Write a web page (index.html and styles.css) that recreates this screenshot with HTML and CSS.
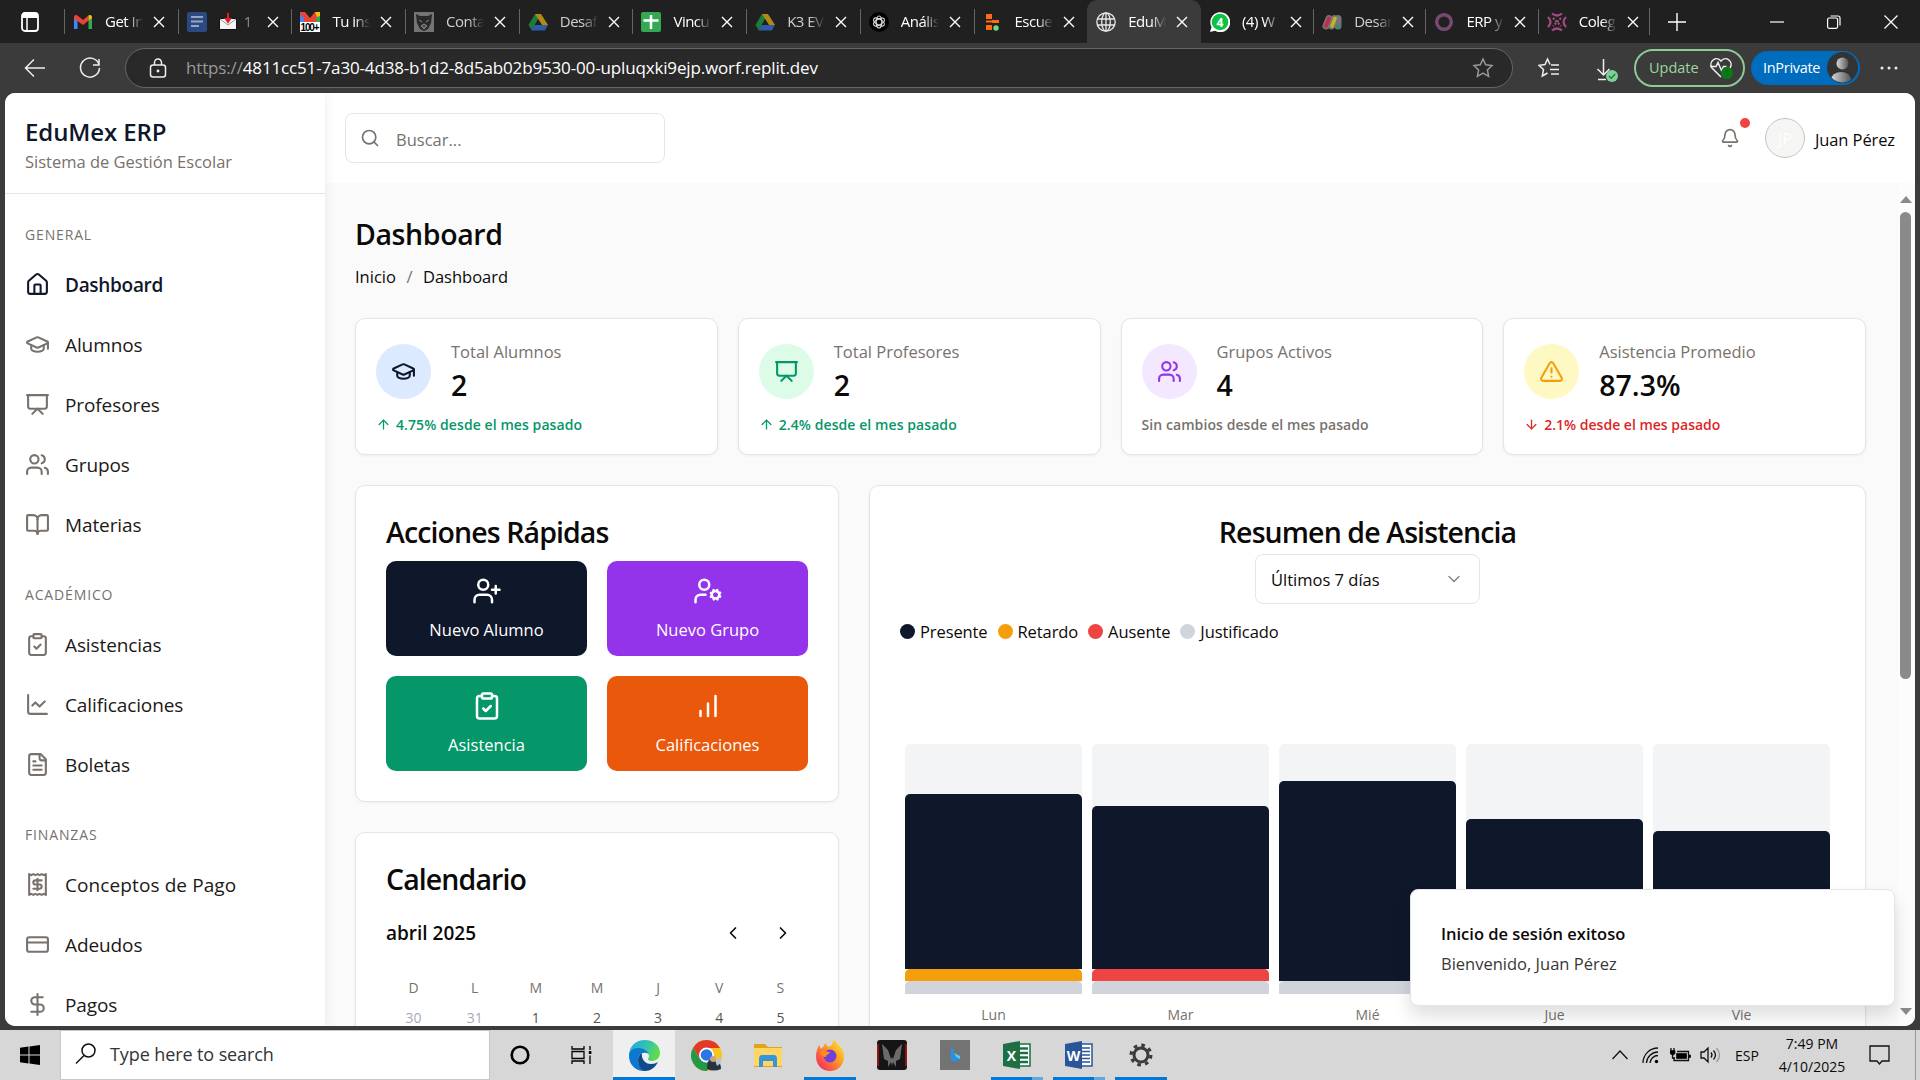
FILE: index.html
```html
<!DOCTYPE html>
<html lang="es">
<head>
<meta charset="utf-8">
<title>EduMex ERP</title>
<link rel="stylesheet" href="styles.css">
</head>
<body>
<svg class="defs" width="0" height="0">
  <symbol id="house" viewBox="0 0 24 24"><path d="M15 21v-8a1 1 0 0 0-1-1h-4a1 1 0 0 0-1 1v8"/><path d="M3 10a2 2 0 0 1 .709-1.528l7-5.999a2 2 0 0 1 2.582 0l7 5.999A2 2 0 0 1 21 10v9a2 2 0 0 1-2 2H5a2 2 0 0 1-2-2z"/></symbol>
  <symbol id="cap" viewBox="0 0 24 24"><path d="M21.42 10.922a1 1 0 0 0-.019-1.838L12.83 5.18a2 2 0 0 0-1.66 0L2.6 9.08a1 1 0 0 0 0 1.832l8.57 3.908a2 2 0 0 0 1.66 0z"/><path d="M22 10v6"/><path d="M6 12.5V16a6 3 0 0 0 12 0v-3.5"/></symbol>
  <symbol id="board" viewBox="0 0 24 24"><path d="M2 3h20"/><path d="M21 3v11a2 2 0 0 1-2 2H5a2 2 0 0 1-2-2V3"/><path d="m7 21 5-5 5 5"/></symbol>
  <symbol id="users" viewBox="0 0 24 24"><path d="M16 21v-2a4 4 0 0 0-4-4H6a4 4 0 0 0-4 4v2"/><circle cx="9" cy="7" r="4"/><path d="M22 21v-2a4 4 0 0 0-3-3.87"/><path d="M16 3.13a4 4 0 0 1 0 7.75"/></symbol>
  <symbol id="book" viewBox="0 0 24 24"><path d="M12 7v14"/><path d="M3 18a1 1 0 0 1-1-1V4a1 1 0 0 1 1-1h5a4 4 0 0 1 4 4 4 4 0 0 1 4-4h5a1 1 0 0 1 1 1v13a1 1 0 0 1-1 1h-6a3 3 0 0 0-3 3 3 3 0 0 0-3-3z"/></symbol>
  <symbol id="clip" viewBox="0 0 24 24"><rect x="8" y="2" width="8" height="4" rx="1"/><path d="M16 4h2a2 2 0 0 1 2 2v14a2 2 0 0 1-2 2H6a2 2 0 0 1-2-2V6a2 2 0 0 1 2-2h2"/><path d="m9 14 2 2 4-4"/></symbol>
  <symbol id="line" viewBox="0 0 24 24"><path d="M3 3v16a2 2 0 0 0 2 2h16"/><path d="m19 9-5 5-4-4-3 3"/></symbol>
  <symbol id="file" viewBox="0 0 24 24"><path d="M15 2H6a2 2 0 0 0-2 2v16a2 2 0 0 0 2 2h12a2 2 0 0 0 2-2V7Z"/><path d="M14 2v4a2 2 0 0 0 2 2h4"/><path d="M10 9H8M16 13H8M16 17H8"/></symbol>
  <symbol id="receipt" viewBox="0 0 24 24"><path d="M4 2v20l2-1 2 1 2-1 2 1 2-1 2 1 2-1 2 1V2l-2 1-2-1-2 1-2-1-2 1-2-1-2 1Z"/><path d="M16 8h-6a2 2 0 1 0 0 4h4a2 2 0 1 1 0 4H8"/><path d="M12 17.5v-11"/></symbol>
  <symbol id="card" viewBox="0 0 24 24"><rect x="2" y="5" width="20" height="14" rx="2"/><path d="M2 10h20"/></symbol>
  <symbol id="dollar" viewBox="0 0 24 24"><path d="M12 2v20"/><path d="M17 5H9.5a3.5 3.5 0 0 0 0 7h5a3.5 3.5 0 0 1 0 7H6"/></symbol>
  <symbol id="search" viewBox="0 0 24 24"><circle cx="11" cy="11" r="8"/><path d="m21 21-4.3-4.3"/></symbol>
  <symbol id="bell" viewBox="0 0 24 24"><path d="M10.268 21a2 2 0 0 0 3.464 0"/><path d="M3.262 15.326A1 1 0 0 0 4 17h16a1 1 0 0 0 .74-1.673C19.41 13.956 18 12.499 18 8A6 6 0 0 0 6 8c0 4.499-1.411 5.956-2.738 7.326"/></symbol>
  <symbol id="up" viewBox="0 0 24 24"><path d="m5 12 7-7 7 7"/><path d="M12 19V5"/></symbol>
  <symbol id="down" viewBox="0 0 24 24"><path d="M12 5v14"/><path d="m19 12-7 7-7-7"/></symbol>
  <symbol id="warn" viewBox="0 0 24 24"><path d="m21.73 18-8-14a2 2 0 0 0-3.48 0l-8 14A2 2 0 0 0 4 21h16a2 2 0 0 0 1.73-3"/><path d="M12 9v4M12 17h.01"/></symbol>
  <symbol id="uplus" viewBox="0 0 24 24"><path d="M16 21v-2a4 4 0 0 0-4-4H6a4 4 0 0 0-4 4v2"/><circle cx="9" cy="7" r="4"/><path d="M19 8v6M22 11h-6"/></symbol>
  <symbol id="ucog" viewBox="0 0 24 24"><circle cx="9" cy="7" r="4"/><path d="M10 15H6a4 4 0 0 0-4 4v2"/><circle cx="18" cy="15" r="3"/><path d="m21.7 16.4-.9-.3M15.2 13.9l-.9-.3M16.6 18.7l.3-.9M19.1 12.2l.3-.9M19.6 18.7l-.4-1M16.8 12.3l-.4-1M14.3 16.6l1-.4M20.7 13.8l1-.4"/></symbol>
  <symbol id="bars" viewBox="0 0 24 24"><path d="M12 20V10M18 20V4M6 20v-4"/></symbol>
  <symbol id="cdown" viewBox="0 0 24 24"><path d="m6 9 6 6 6-6"/></symbol>
  <symbol id="cleft" viewBox="0 0 24 24"><path d="m15 18-6-6 6-6"/></symbol>
  <symbol id="cright" viewBox="0 0 24 24"><path d="m9 18 6-6-6-6"/></symbol>
  <symbol id="x" viewBox="0 0 12 12"><path d="M1 1l10 10M11 1L1 11"/></symbol>
  <symbol id="drive" viewBox="0 0 20 20"><path d="M7 2h6l-6.500 11.500L3.500 18 0.500 13z" fill="#1c7c3a"/><path d="M7 2h6l7 11h-6z" fill="#b08a13"/><path d="M6.500 13H20l-3.200 5.500H3.300z" fill="#2f5ca8"/><path d="M10 7.500 13.300 13H6.700z" fill="#202020"/></symbol>
</svg>

<header class="tabs">
  <div class="tabs-menu"><svg width="20" height="22" viewBox="0 0 20 22"><rect x="2" y="2" width="16" height="18" rx="3" fill="none" stroke="#fff" stroke-width="1.800"/><path d="M2 4.500a3 3 0 0 1 3-3h10a3 3 0 0 1 3 3V7H2z" fill="#fff"/><path d="M7 7v13" stroke="#fff" stroke-width="1.500"/></svg></div>
  <div class="tab-row">
    <div class="tab"><svg class="fav" viewBox="0 0 20 20"><path d="M1 17V5l3.500 2.500V17z" fill="#4285f4"/><path d="M15.500 17V7.500L19 5v12z" fill="#34a853"/><path d="M1 5.500C1 3 3 2.500 4.500 3.500L10 8l5.500-4.500v5L10 13 1 6.500z" fill="#ea4335"/><path d="M15.500 8.500v-5C17 2.500 19 3 19 5.500V6z" fill="#fbbc04"/></svg><span>Get In</span><svg class="close"><use href="#x"/></svg></div>
    <div class="tab dim"><svg class="fav" viewBox="0 0 20 20"><rect width="20" height="20" rx="2" fill="#2b4a83"/><path d="M4 5h12M4 9.500h12M4 14h8" stroke="#97a5bf" stroke-width="2"/></svg><span class="with-mail"><svg width="18" height="17" viewBox="0 0 18 17"><path d="M0 5h18v12H0z" fill="#111"/><path d="M1 6h16v10H1z" fill="#f3f3f3"/><path d="m1 6 8 6 8-6" fill="none" stroke="#999"/><path d="M9 0v7M7 6l2 3 2-3z" stroke="#e01f2b" stroke-width="2"/></svg>1</span><svg class="close"><use href="#x"/></svg></div>
    <div class="tab"><svg class="fav" viewBox="0 0 20 20"><path d="M0 0h5l5 6 5-6h5v11H0z" fill="#ea4335"/><path d="M0 2l4 4v5H0z" fill="#4285f4"/><path d="M20 3l-4 3v5h4z" fill="#34a853"/><path d="M15 0h5v4l-3 1z" fill="#fbbc04"/><rect y="10" width="20" height="10" fill="#fff"/><text x="10" y="18.700" text-anchor="middle" class="badge" textLength="19">100+</text></svg><span>Tu ins</span><svg class="close"><use href="#x"/></svg></div>
    <div class="tab dim"><svg class="fav" viewBox="0 0 20 20"><path fill="#747474" d="M0 0h20v20H0z"/><path d="m2 2 4 2h8l4-2-1 9-3 6-4 2-4-2-3-6z" fill="#292929"/><path d="m5 8 3 2M15 8l-3 2M7 14l3-2 3 2-3 3z" stroke="#8a8a8a" fill="#555"/></svg><span>Conta</span><svg class="close"><use href="#x"/></svg></div>
    <div class="tab dim"><svg class="fav"><use href="#drive"/></svg><span>Desaf</span><svg class="close"><use href="#x"/></svg></div>
    <div class="tab no-sep"><svg class="fav" viewBox="0 0 20 20"><rect width="20" height="20" rx="2" fill="#34a853"/><path d="M10 3v14M2.500 8.500h15" stroke="#fff" stroke-width="2.500"/></svg><span>Vincu</span><svg class="close"><use href="#x"/></svg></div>
    <div class="tab dim"><svg class="fav"><use href="#drive"/></svg><span>K3 EV</span><svg class="close"><use href="#x"/></svg></div>
    <div class="tab"><svg class="fav" viewBox="0 0 20 20"><circle cx="10" cy="10" r="10" fill="#000"/><g fill="none" stroke="#ddd" stroke-width="1.100"><ellipse cx="10" cy="10" rx="2.800" ry="6"/><ellipse cx="10" cy="10" rx="2.800" ry="6" transform="rotate(60 10 10)"/><ellipse cx="10" cy="10" rx="2.800" ry="6" transform="rotate(120 10 10)"/></g></svg><span>Anális</span><svg class="close"><use href="#x"/></svg></div>
    <div class="tab"><svg class="fav" viewBox="0 0 20 20"><path d="M3 2h6v5H3zM9 8h7v3H9zM3 13h6v5H3zM3 8.500h6v2H3z" fill="#ff6a13"/><circle cx="13" cy="16" r="2.700" fill="#6bdc7c"/></svg><span>Escue</span><svg class="close"><use href="#x"/></svg></div>
    <div class="tab active"><svg class="fav" viewBox="0 0 20 20" fill="none" stroke="#e8e8e8" stroke-width="1.300"><circle cx="10" cy="10" r="9.200"/><ellipse cx="10" cy="10" rx="4.300" ry="9.200"/><path d="M1.500 7h17M1.500 13h17M10 1v18"/></svg><span>EduM</span><svg class="close"><use href="#x"/></svg></div>
    <div class="tab"><svg class="fav" viewBox="0 0 20 20"><path d="m0 20 1.500-5A10 10 0 1 1 5 18.700z" fill="#fff"/><circle cx="10" cy="10" r="8.300" fill="#0cc143"/><text x="10" y="14.500" text-anchor="middle" class="wa">4</text></svg><span>(4) W</span><svg class="close"><use href="#x"/></svg></div>
    <div class="tab dim"><svg class="fav" viewBox="0 0 20 20" fill="none" stroke-linecap="round"><path d="M4 14 7 6.500M9.500 14l3-7.500M16 14V6.500" stroke="#747474" stroke-width="7"/><g stroke-width="3.600"><path d="M4 14 7 6.500" stroke="#c42a4c"/><path d="M10 14l3-7.500" stroke="#c9b02a"/><path d="M16.500 14.500v.1" stroke="#169c68"/></g></svg><span>Desar</span><svg class="close"><use href="#x"/></svg></div>
    <div class="tab"><svg class="fav" viewBox="0 0 20 20"><circle cx="10" cy="10" r="7.300" fill="none" stroke="#78486f" stroke-width="3.500"/></svg><span>ERP y</span><svg class="close"><use href="#x"/></svg></div>
    <div class="tab"><svg class="fav" viewBox="0 0 20 20" fill="none" stroke="#a34a82" stroke-width="2.200"><path d="M5 1.500q5 4 10 0M5 18.500q5-4 10 0M1 5q5 5 0 10M19 5q-5 5 0 10"/><path d="m6 6 8 8M14 6l-8 8" stroke-dasharray="2 1.500"/></svg><span>Coleg</span><svg class="close"><use href="#x"/></svg></div>
  </div>
  <svg class="plus" width="18" height="18" viewBox="0 0 18 18"><path d="M9 0v18M0 9h18"/></svg>
  <div class="win">
    <svg width="14" height="14" viewBox="0 0 14 14"><path d="M0 7h14"/></svg>
    <svg width="14" height="14" viewBox="0 0 14 14"><rect x=".6" y="3" width="10" height="10.300" rx="1.500"/><path d="M3.500 1h7.500a2 2 0 0 1 2 2v7.500"/></svg>
    <svg width="14" height="14" viewBox="0 0 14 14"><path d="m.5.5 13 13M13.500.5l-13 13"/></svg>
  </div>
</header>

<div class="toolbar">
  <svg class="back" width="22" height="20" viewBox="0 0 22 20"><path d="M21 10H2M10 1.500 1.500 10l8.500 8.500"/></svg>
  <svg class="reload" width="22" height="22" viewBox="0 0 22 22"><path d="M20 7.500A9.500 9.500 0 1 0 20.500 11M20 2v6h-6"/></svg>
  <div class="url">
    <svg width="18" height="20" viewBox="0 0 18 20"><rect x="1.500" y="7" width="15" height="12" rx="2.500"/><path d="M5.500 7V4.500a3.500 3.500 0 0 1 7 0V7"/><circle cx="9" cy="13" r=".7"/></svg>
    <p><span class="scheme">https://</span><span>4811cc51-7a30-4d38-b1d2-8d5ab02b9530-00-upluqxki9ejp.worf.replit.dev</span></p>
    <svg class="star" width="22" height="22" viewBox="0 0 22 22"><path d="m11 2 2.700 5.800 6.300.8-4.600 4.400 1.200 6.300L11 16.200l-5.600 3.100L6.600 13 2 8.600l6.300-.8z"/></svg>
  </div>
  <svg class="favs" width="22" height="22" viewBox="0 0 22 22"><path d="M12 7.500 9.500 2 7 7.500l-6 .8L5.500 12.500 4.300 19l5.200-3M13 8h8M12 12.500h9M13 17h8"/></svg>
  <svg class="dl" width="24" height="26" viewBox="0 0 24 26"><path d="M8.500 2v16M2.500 12l6 6 6-6M3 22.500h8"/><circle cx="17" cy="19" r="6" fill="#7fce9b" stroke="none"/><path d="m14 19 2.200 2.200 4-4.200" stroke="#183"/></svg>
  <div class="update"><span>Update</span><svg width="24" height="24" viewBox="0 0 24 24"><path d="M12 21 3 12C-1 6 7-1 12 5c5-6 13 1 9 7M1 10.500h6l2-4 3.500 8 2-4h3"/><circle cx="18" cy="17" r="6" fill="#0b7a12" stroke="none"/><path d="M18 13.500v4M18 19.500v1" stroke="#063"/></svg></div>
  <div class="inprivate"><span>InPrivate</span><svg width="31" height="31" viewBox="0 0 31 31"><defs><linearGradient id="pg"><stop stop-color="#d8d8d8"/><stop offset="1" stop-color="#555"/></linearGradient><clipPath id="pc"><circle cx="15.500" cy="15.500" r="15"/></clipPath></defs><circle cx="15.500" cy="15.500" r="15.500" fill="#333"/><g clip-path="url(#pc)" fill="url(#pg)"><circle cx="15.500" cy="11.500" r="6"/><ellipse cx="14" cy="28" rx="10" ry="8"/></g></svg></div>
  <svg class="dots" width="18" height="4" viewBox="0 0 18 4"><circle cx="2" cy="2" r="1.500"/><circle cx="9" cy="2" r="1.500"/><circle cx="16" cy="2" r="1.500"/></svg>
</div>

<div class="frame">
<div class="page">
  <aside class="sidebar">
    <div class="brand"><h1>EduMex ERP</h1><p>Sistema de Gestión Escolar</p></div>
    <nav>
      <h2>GENERAL</h2>
      <a class="on"><svg><use href="#house"/></svg><span>Dashboard</span></a>
      <a><svg><use href="#cap"/></svg><span>Alumnos</span></a>
      <a><svg><use href="#board"/></svg><span>Profesores</span></a>
      <a><svg><use href="#users"/></svg><span>Grupos</span></a>
      <a><svg><use href="#book"/></svg><span>Materias</span></a>
      <h2>ACADÉMICO</h2>
      <a><svg><use href="#clip"/></svg><span>Asistencias</span></a>
      <a><svg><use href="#line"/></svg><span>Calificaciones</span></a>
      <a><svg><use href="#file"/></svg><span>Boletas</span></a>
      <h2>FINANZAS</h2>
      <a class="wide"><svg><use href="#receipt"/></svg><span>Conceptos de Pago</span></a>
      <a><svg><use href="#card"/></svg><span>Adeudos</span></a>
      <a><svg><use href="#dollar"/></svg><span>Pagos</span></a>
    </nav>
  </aside>
  <div class="main">
    <div class="topbar">
      <div class="search"><svg width="20" height="20"><use href="#search"/></svg><span>Buscar...</span></div>
      <div class="user">
        <div class="bell"><svg width="20" height="20"><use href="#bell"/></svg><i></i></div>
        <div class="avatar">JP</div><span>Juan Pérez</span>
      </div>
    </div>
    <div class="body">
      <div class="content">
        <h1 class="title">Dashboard</h1>
        <div class="crumbs"><span>Inicio</span><span class="slash">/</span><span>Dashboard</span></div>
        <div class="stats">
          <div class="stat"><div class="stat-top"><div class="disc blue"><svg><use href="#cap"/></svg></div><div><p>Total Alumnos</p><b>2</b></div></div><div class="trend green"><svg><use href="#up"/></svg><span>4.75% desde el mes pasado</span></div></div>
          <div class="stat"><div class="stat-top"><div class="disc mint"><svg><use href="#board"/></svg></div><div><p>Total Profesores</p><b>2</b></div></div><div class="trend green"><svg><use href="#up"/></svg><span>2.4% desde el mes pasado</span></div></div>
          <div class="stat"><div class="stat-top"><div class="disc violet"><svg><use href="#users"/></svg></div><div><p>Grupos Activos</p><b>4</b></div></div><div class="trend"><span>Sin cambios desde el mes pasado</span></div></div>
          <div class="stat"><div class="stat-top"><div class="disc yellow"><svg><use href="#warn"/></svg></div><div><p>Asistencia Promedio</p><b>87.3%</b></div></div><div class="trend red"><svg><use href="#down"/></svg><span>2.1% desde el mes pasado</span></div></div>
        </div>
        <div class="columns">
          <div class="left">
            <section class="card actions">
              <h3>Acciones Rápidas</h3>
              <div class="buttons">
                <div class="btn navy"><svg><use href="#uplus"/></svg><span>Nuevo Alumno</span></div>
                <div class="btn purple"><svg><use href="#ucog"/></svg><span>Nuevo Grupo</span></div>
                <div class="btn emerald"><svg><use href="#clip"/></svg><span>Asistencia</span></div>
                <div class="btn orange"><svg><use href="#bars"/></svg><span>Calificaciones</span></div>
              </div>
            </section>
            <section class="card calendar">
              <h3>Calendario</h3>
              <div class="month"><b>abril 2025</b><div><svg><use href="#cleft"/></svg><svg><use href="#cright"/></svg></div></div>
              <div class="days"><span>D</span><span>L</span><span>M</span><span>M</span><span>J</span><span>V</span><span>S</span><span class="off">30</span><span class="off">31</span><span class="d">1</span><span class="d">2</span><span class="d">3</span><span class="d">4</span><span class="d">5</span></div>
            </section>
          </div>
          <section class="card summary">
            <h3>Resumen de Asistencia</h3>
            <div class="select"><span>Últimos 7 días</span><svg width="20" height="20"><use href="#cdown"/></svg></div>
            <div class="legend"><span><i class="present"></i>Presente</span><span><i class="late"></i>Retardo</span><span><i class="absent"></i>Ausente</span><span><i class="excused"></i>Justificado</span></div>
            <div class="chart">
              <div class="bar"><div class="stack"><i class="present" style="height:70%"></i><i class="late" style="height:5%"></i><i class="excused" style="height:5.200%"></i></div><span>Lun</span></div>
              <div class="bar"><div class="stack"><i class="present" style="height:65%"></i><i class="absent" style="height:5%"></i><i class="excused" style="height:5.200%"></i></div><span>Mar</span></div>
              <div class="bar"><div class="stack"><i class="present" style="height:80%"></i><i class="excused" style="height:5.200%"></i></div><span>Mié</span></div>
              <div class="bar"><div class="stack"><i class="present" style="height:70%"></i></div><span>Jue</span></div>
              <div class="bar"><div class="stack"><i class="present" style="height:65.200%"></i></div><span>Vie</span></div>
            </div>
          </section>
        </div>
      </div>
      <div class="scroll"><i class="arrow-up"></i><div class="thumb"></div><i class="arrow-down"></i></div>
    </div>
  </div>
  <div class="toast"><b>Inicio de sesión exitoso</b><p>Bienvenido, Juan Pérez</p></div>
</div>
</div>

<footer class="taskbar">
  <div class="start"><svg width="20" height="20" viewBox="0 0 20 20"><path d="M0 2.800 8.500 1.600V9.500H0zM9.500 1.400 20 0v9.500H9.500zM0 10.500h8.500v8L0 17.300zM9.500 10.500H20V20L9.500 18.600z"/></svg></div>
  <div class="find"><svg width="22" height="22" viewBox="0 0 22 22"><circle cx="13.500" cy="7.500" r="6.500"/><path d="M9 12.500 1 20.500"/></svg><span>Type here to search</span></div>
  <div class="apps">
    <div class="app"><svg width="20" height="20" viewBox="0 0 20 20"><circle cx="10" cy="10" r="8.300" fill="none" stroke="#000" stroke-width="2.600"/></svg></div>
    <div class="app"><svg width="22" height="20" viewBox="0 0 22 20" fill="none" stroke="#000" stroke-width="1.300"><path d="M1 1v3h12V1M1 19v-3h12v3M1 6.500h12v7H1zM19 1v4M19 10.500V19"/><path d="M17.800 6h2.600v3h-2.600z" fill="#000" stroke="none"/></svg></div>
    <div class="app current"><svg width="31" height="31" viewBox="0 0 31 31"><defs><linearGradient id="e1" x1="0" y1="0" x2="1" y2=".3"><stop stop-color="#1ba9e2"/><stop offset=".6" stop-color="#35c1b1"/><stop offset="1" stop-color="#5fdc4c"/></linearGradient></defs><path d="M0 16C0 6 7 0 16 0c9 0 15 6 15 13 0 5-4 8-8 8-3 0-4-1-4-2 0-1 1-1 1-3 0-3-3-5-6-5C7 11 3 16 3 20z" fill="url(#e1)"/><path d="M0 16c0-5 4-8 9-8 6 0 9 3 11 6-6-3-11 0-11 6 0 6 4 10 9 11C7 32 0 25 0 16z" fill="#0a79cf"/><path d="M9 20c0-4 2-6 4-7-1 6 3 11 9 11 3 0 5-1 7-2-3 6-8 9-13 9-4-1-7-5-7-11z" fill="#114a8b"/></svg></div>
    <div class="app"><svg width="31" height="31" viewBox="0 0 31 31"><circle cx="15.500" cy="15.500" r="15.500" fill="#f9c61b"/><path d="M2 8a15.500 15.500 0 0 1 27 0H15.500L9 19z" fill="#e2392b"/><path d="M2 8a15.500 15.500 0 0 0 14 23l6-12-13 0z" fill="#22994a"/><circle cx="15.500" cy="15" r="7.500" fill="#fff"/><circle cx="15.500" cy="15" r="5.800" fill="#2a75e8"/><path d="M16 29c0-7 1-10 6-10s8 4 8 10q-7 3-14 0z" fill="#293241"/><circle cx="22" cy="19" r="3" fill="#c9a28a"/><path d="M24 20l6-3v6l-4 3z" fill="#b9c7cb"/></svg></div>
    <div class="app"><svg width="28" height="26" viewBox="0 0 28 26"><path d="M0 2h11l3 3h14v20H0z" fill="#e0a31a"/><path d="M0 6h28v17a1 1 0 0 1-1 1H1a1 1 0 0 1-1-1z" fill="#ffd563"/><path d="M5 25V17q0-4 3-4h12q3 0 3 4v8h-4v-6h-10v6z" fill="#3494dc"/></svg></div>
    <div class="app open"><svg width="30" height="31" viewBox="0 0 30 31"><defs><linearGradient id="ff" x1="1" y1="0" x2="0" y2="1"><stop stop-color="#fff03d"/><stop offset=".4" stop-color="#ffa11f"/><stop offset="1" stop-color="#f5156c"/></linearGradient></defs><path d="M1 16C1 11 3 8 4 5l2 4 3-3 1-3 3 4 4-2c0-2 1-4 3-5 1 5 9 7 9 16 0 9-6 15-14 15S1 25 1 16z" fill="url(#ff)"/><circle cx="15" cy="16" r="6.500" fill="#7240d8"/><path d="M5 12c4-3 7 0 10 0-1 3-4 2-4 5-3 0-5-2-6-5z" fill="#ff8c1e"/></svg></div>
    <div class="app"><svg width="30" height="30" viewBox="0 0 30 30"><rect width="30" height="30" rx="3" fill="#151515"/><path d="M1 4v22M29 4v22" stroke="#8d1515" stroke-width="2"/><path d="M5 4l6 6 3 9 1-2 1 2 3-9 6-6-2 15-4 2v6l-3-5-1 4-1-4-3 5v-6l-4-2z" fill="#6b6b6b"/></svg></div>
    <div class="app"><svg width="30" height="30" viewBox="0 0 30 30"><path fill="#737373" d="M0 0h30v30H0z"/><path d="m11 8 3 1.500V17l6-1v3l-6 3-3-2z" fill="#2492ed"/><path d="m14 13 6 3v3l-4-2z" fill="#53cff0"/></svg></div>
    <div class="app open multi"><svg width="28" height="28" viewBox="0 0 28 28"><path d="M14 3h13v22H14z" fill="#fff" stroke="#1d7044" stroke-width="1.500"/><path d="M17 7.500h8M17 12h8M17 16.500h8M17 21h8" stroke="#1d7044" stroke-width="2.500"/><path d="M0 3 17 0v28L0 25z" fill="#1d7044"/><text x="8.500" y="19.500" text-anchor="middle" class="glyph">X</text></svg></div>
    <div class="app open multi"><svg width="28" height="28" viewBox="0 0 28 28"><path d="M14 3h13v22H14z" fill="#fff" stroke="#2a5699" stroke-width="1.500"/><path d="M17 7h8M17 10.500h8M17 14h8M17 17.500h8M17 21h8" stroke="#2a5699" stroke-width="1.500"/><path d="M0 3 17 0v28L0 25z" fill="#2a5699"/><text x="8.500" y="19.500" text-anchor="middle" class="glyph">W</text></svg></div>
    <div class="app open"><svg width="24" height="24" viewBox="0 0 24 24" fill="none" stroke="#3b3b3b"><circle cx="12" cy="12" r="7" stroke-width="3"/><circle cx="12" cy="12" r="9.900" stroke-width="3.200" stroke-dasharray="3.600 4.175"/></svg></div>
  </div>
  <div class="tray">
    <svg width="16" height="10" viewBox="0 0 16 10"><path d="m.5 9 7.500-8 7.500 8"/></svg>
    <svg width="17" height="17" viewBox="0 0 17 17"><path d="M1 16A15 15 0 0 1 16 1M4.500 16A11.500 11.500 0 0 1 16 5M8 16a8 8 0 0 1 8-7.500"/><circle cx="14.500" cy="14.500" r="1.700" fill="#000" stroke="none"/></svg>
    <svg width="21" height="15" viewBox="0 0 21 15"><path d="M7 3.500h11.500v9H4V9.500"/><path d="M6.500 5.500h10v5h-10zM19 7h1.500v2.500H19zM0 2.500h5v3L3 7.500 0 5.500z" fill="#000" stroke-width=".8"/><path d="M1 0v3M4 0v3M2.500 7v3H5"/></svg>
    <svg width="21" height="18" viewBox="0 0 21 18"><path d="M1 6h3l4-4v14l-4-4H1zM11 6.500q2 2.500 0 5M13.500 4.500q4 4.500 0 9"/><path d="M16.500 2q6 7 0 14" stroke="#999"/></svg>
    <span class="lang">ESP</span>
    <div class="clock"><span>7:49 PM</span><span>4/10/2025</span></div>
    <svg width="21" height="20" viewBox="0 0 21 20"><path d="M1 1h19v15h-7l-2.500 3L8 16H1z"/></svg>
    <i class="peek"></i>
  </div>
</footer>
</body>
</html>
```
FILE: styles.css
```css
* { box-sizing: border-box; margin: 0; padding: 0; }
html, body { width: 1920px; height: 1080px; overflow: hidden; }
body { display: flex; flex-direction: column; background: #3b3b3b; color: #0c0a09; font-family: "Open Sans", "Noto Sans", sans-serif; font-size: 16.500px; line-height: 25px; white-space: nowrap; }
svg { display: block; flex: none; }
.defs { position: absolute; }
h1, h2, h3, b { font-weight: 600; }

/* browser tabs */
.tabs { height: 43px; background: #202020; display: flex; align-items: center; color: #fff; flex: none; }
.tabs-menu { width: 64px; padding-left: 20px; }
.tab-row { display: grid; grid-template-columns: repeat(10, 113.700px) repeat(4, 112.300px); height: 43px; }
.tab { display: flex; align-items: center; padding-left: 9px; position: relative; }
.tab::before { content: ""; position: absolute; left: 0; top: 9px; width: 1px; height: 25px; background: #666; }
.tab:last-child { border-right: 1px solid #666; border-image: linear-gradient(transparent 9px, #666 9px 34px, transparent 34px) 1; }
.tab.active::before, .tab.active + .tab::before { display: none; }
.tab.active { background: #3b3b3b; border-radius: 10px 10px 0 0; }
.fav { width: 20px; height: 20px; }
.tab span { width: 38px; height: 22px; margin-left: 12px; overflow: hidden; font-size: 15px; line-height: 21px; letter-spacing: -.5px; -webkit-mask-image: linear-gradient(90deg, #000 60%, transparent); mask-image: linear-gradient(90deg, #000 60%, transparent); }
.tab.dim span { color: #cfcfcf; }
.tab .with-mail { display: flex; gap: 7px; align-items: center; }
.close { width: 12px; height: 12px; margin-left: 10px; fill: none; stroke: #fff; stroke-width: 1.400; }
.badge { font: 700 10px "Liberation Sans", sans-serif; }
.wa { font: 700 12px "Open Sans", sans-serif; fill: #fff; }
.plus { margin-left: 18px; stroke: #fff; stroke-width: 1.400; }
.win { margin-left: auto; margin-right: 22px; display: flex; gap: 43px; fill: none; stroke: #fff; stroke-width: 1.200; }

.toolbar { height: 50px; flex: none; display: flex; align-items: center; padding: 0 22px 1px 24px; fill: none; stroke: #eee; stroke-width: 1.500; color: #fff; }
.toolbar svg { fill: none; }
.reload { margin-left: 33px; }
.url { width: 1388px; height: 40px; margin-left: 24px; padding: 0 18px 0 23px; background: #292929; border: 1px solid #666; border-radius: 20px; display: flex; align-items: center; }
.url p { margin-left: 19px; font-size: 17px; letter-spacing: -.15px; }
.scheme { color: #999; }
.star { margin-left: auto; stroke: #999; }
.favs { margin-left: 25px; }
.dl { margin-left: 35px; margin-top: 4px; }
.update { width: 111px; height: 38px; margin-left: 15px; border: 2px solid #8fc995; border-radius: 19px; display: flex; align-items: center; gap: 10px; padding-left: 13px; color: #9bd5a0; font-size: 14.500px; }
.update span { width: 50px; }
.inprivate { width: 109px; height: 34px; margin-left: 6px; border-radius: 17px; background: #006cbe; display: flex; align-items: center; justify-content: space-between; padding: 0 2px 0 12px; font-size: 14.500px; letter-spacing: -.3px; }
.inprivate svg { stroke: none; }
.toolbar .dots { margin-left: auto; fill: #eee; stroke: none; }

/* page frame */
.frame { height: 937px; flex: none; padding: 0 5px 4px; }
.page { height: 933px; border-radius: 10px; overflow: hidden; background: #fafafa; display: flex; position: relative; }
.sidebar { width: 320px; background: #fff; flex: none; box-shadow: 2px 0 10px rgba(0,0,0,.06); z-index: 1; }
.brand { height: 101px; border-bottom: 1px solid #e5e5e5; padding: 21px 20px 0; }
.brand h1 { color: #0f172a; font-size: 24px; line-height: 36px; letter-spacing: -.1px; }
.brand p { color: #78716c; line-height: 24px; }
nav { padding: 20px; }
nav h2 { height: 40px; font-size: 14px; line-height: 41px; font-weight: 400; letter-spacing: .85px; color: #78716c; }
nav a + h2 { margin-top: 20px; }
nav a { display: flex; align-items: center; height: 60px; gap: 15px; font-size: 19px; letter-spacing: -.1px; color: #1c1917; }
nav a span { padding-top: 2px; }
nav .wide { letter-spacing: .1px; }
nav svg { width: 25px; height: 25px; color: #78716c; }
nav .on { font-weight: 600; color: #0f172a; letter-spacing: -.3px; }
nav .on svg { color: #0f172a; }
.page svg { fill: none; stroke: currentColor; stroke-width: 2; stroke-linecap: round; stroke-linejoin: round; }
.main { flex: 1; display: flex; flex-direction: column; min-width: 0; }
.topbar { height: 90px; flex: none; background: #fff; display: flex; justify-content: space-between; align-items: center; padding: 0 20px; }
.search { width: 320px; height: 50px; border: 1px solid #e7e5e4; border-radius: 8px; display: flex; align-items: center; gap: 16px; padding-left: 14px; color: #78716c; }
.search span, .user > span { padding-top: 2px; }
.user > span { letter-spacing: -.1px; }
.user { display: flex; align-items: center; }
.bell { color: #78716c; position: relative; }
.bell i { position: absolute; left: 20px; top: -10px; width: 10px; height: 10px; border-radius: 5px; background: #ef4444; }
.avatar { width: 40px; height: 40px; border-radius: 20px; margin: 0 10px 0 25px; background: #f5f5f4; border: 1px solid #c4c4c6; color: #fff; display: grid; place-items: center; }
.body { flex: 1; display: flex; min-height: 0; }
.content { flex: 1; padding: 31px 34px 0 30px; overflow: hidden; }
.title { font-size: 28.500px; line-height: 40px; letter-spacing: -.4px; }
.crumbs { display: flex; gap: 10.500px; margin-top: 10px; }
.slash { color: #78716c; }
.stats { display: grid; grid-template-columns: repeat(4, 1fr); gap: 20px; margin-top: 29px; }
.stat { height: 137px; background: #fff; border: 1px solid #e5e5e5; border-radius: 10px; padding: 19px 20px; box-shadow: 0 1px 3px rgba(0,0,0,.06); }
.stat-top { display: flex; gap: 20px; height: 66px; align-items: center; }
.stat-top p { color: #78716c; line-height: 26px; padding-top: 2px; }
.stat-top b { display: block; font-size: 28.500px; line-height: 40px; }
.disc { width: 55px; height: 55px; border-radius: 50%; display: grid; place-items: center; }
.disc svg { width: 25px; height: 25px; }
.blue { background: #dbeafe; color: #0f172a; }
.mint { background: #dcfce7; color: #059669; }
.violet { background: #f3e8ff; color: #9333ea; }
.yellow { background: #fef9c3; color: #f59e0b; }
.trend { display: flex; align-items: center; gap: 5px; margin-top: 9px; height: 22px; font-size: 14px; letter-spacing: .08px; font-weight: 600; color: #78716c; }
.trend svg { width: 15px; height: 15px; }
.trend.green { color: #059669; }
.trend.red { color: #dc2626; letter-spacing: 0; }
.columns { display: grid; grid-template-columns: 484px 997px; gap: 30px; margin-top: 30px; }
.card { background: #fff; border: 1px solid #e5e5e5; border-radius: 10px; padding: 30px; box-shadow: 0 1px 3px rgba(0,0,0,.05); }
.card h3 { font-size: 28.500px; line-height: 32px; letter-spacing: -.9px; }
.actions { height: 317px; }
.buttons { display: grid; grid-template-columns: 1fr 1fr; gap: 20px; margin-top: 13px; }
.btn { height: 95px; border-radius: 10px; color: #fff; display: flex; flex-direction: column; align-items: center; gap: 11px; padding-top: 15px; }
.btn svg { width: 30px; height: 30px; }
.navy, .present { background: #0f172a; }
.purple { background: #9333ea; }
.emerald { background: #059669; }
.orange { background: #ea580c; }
.calendar { height: 400px; margin-top: 30px; }
.month { display: flex; justify-content: space-between; margin-top: 26px; height: 24px; font-size: 19px; padding-right: 15px; align-items: center; }
.month div { display: flex; gap: 30px; }
.month svg { width: 20px; height: 20px; }
.days { display: grid; grid-template-columns: repeat(7, 61px); justify-content: space-between; margin: 28px -3px 0; font-size: 14px; line-height: 30px; text-align: center; color: #78716c; }
.days .off { color: #a3abb9; }
.days .d { color: #57534e; }
.summary { display: flex; flex-direction: column; align-items: center; height: 640px; }
.select { width: 225px; height: 50px; margin-top: 6px; border: 1px solid #e5e5e5; border-radius: 8px; display: flex; justify-content: space-between; align-items: center; padding: 0 15px; }
.select svg { opacity: .5; width: 20px; height: 20px; stroke-width: 1.700; }
.legend { align-self: stretch; display: flex; gap: 10px; margin-top: 15px; letter-spacing: -.1px; }
.legend span { display: flex; gap: 5px; align-items: center; }
.legend i { width: 15px; height: 15px; border-radius: 50%; }
.late { background: #f59e0b; }
.absent { background: #ef4444; }
.excused { background: #d1d5db; }
.chart { align-self: stretch; display: grid; grid-template-columns: repeat(5, 177px); gap: 10px; margin: 100px 5px 0; }
.bar { text-align: center; font-size: 14px; color: #78716c; }
.stack { height: 250px; background: #f3f4f6; border-radius: 5px 5px 0 0; display: flex; flex-direction: column; justify-content: flex-end; margin-bottom: 8px; }
.stack i { display: block; border-radius: 5px 5px 0 0; }
.scroll { width: 17px; display: flex; flex-direction: column; align-items: center; background: #fcfcfc; padding: 13px 2px 0 0; margin-left: -2px; }
.arrow-up, .arrow-down { border: 6px solid transparent; border-top: 0; border-bottom: 7px solid #8a8a8a; }
.arrow-down { border-bottom: 0; border-top: 7px solid #8a8a8a; margin-top: auto; margin-bottom: 11px; }
.thumb { width: 11px; height: 467px; margin-top: 9px; border-radius: 6px; background: #8a8a8a; }
.toast { position: absolute; right: 20px; bottom: 20px; width: 485px; height: 117px; background: #fff; border: 1px solid #e5e5e5; border-radius: 8px; padding: 31px 30px; box-shadow: 0 10px 18px rgba(0,0,0,.13); line-height: 26px; z-index: 2; }
.toast p { margin-top: 4px; color: #3a3836; }

/* desktop taskbar */
.taskbar { height: 50px; flex: none; background: #d7d7d7; display: flex; align-items: stretch; }
.start { width: 60px; padding: 15px 0 0 20px; }
.find { width: 430px; background: #fff; border: 1px solid #c6c6c6; display: flex; align-items: center; padding: 0 0 2px 14px; gap: 13px; font-size: 18px; letter-spacing: -.1px; color: #333; fill: none; stroke: #111; stroke-width: 1.500; }
.find span { stroke: none; }
.apps { display: grid; grid-template-columns: 60px 63px repeat(9, 62.100px); }
.app { display: grid; place-items: center; position: relative; }
.app.current { background: #efefef; }
.app.current::after, .app.open::after { content: ""; position: absolute; bottom: 0; left: 0; right: 0; height: 3px; background: #0078d7; }
.app.open::after { left: 5px; right: 5px; }
.app.multi::after { background: linear-gradient(90deg, #0078d7 41px, #5ea8e4 41px); }
.glyph { font: 700 14px "Open Sans", sans-serif; fill: #fff; }
.tray { margin-left: auto; display: flex; align-items: center; font-size: 14px; }
.tray svg { fill: none; stroke: #111; stroke-width: 1.300; margin-right: 14px; }
.tray svg:nth-of-type(2) { margin-right: 11px; }
.tray svg:nth-of-type(3) { margin-right: 9px; }
.lang { width: 37px; }
.clock { width: 80px; display: flex; flex-direction: column; line-height: 23px; text-align: center; margin-right: 17px; }
.tray svg:last-of-type { margin-right: 25px; }
.peek { width: 5px; height: 50px; border-left: 1px solid #999; }
```
